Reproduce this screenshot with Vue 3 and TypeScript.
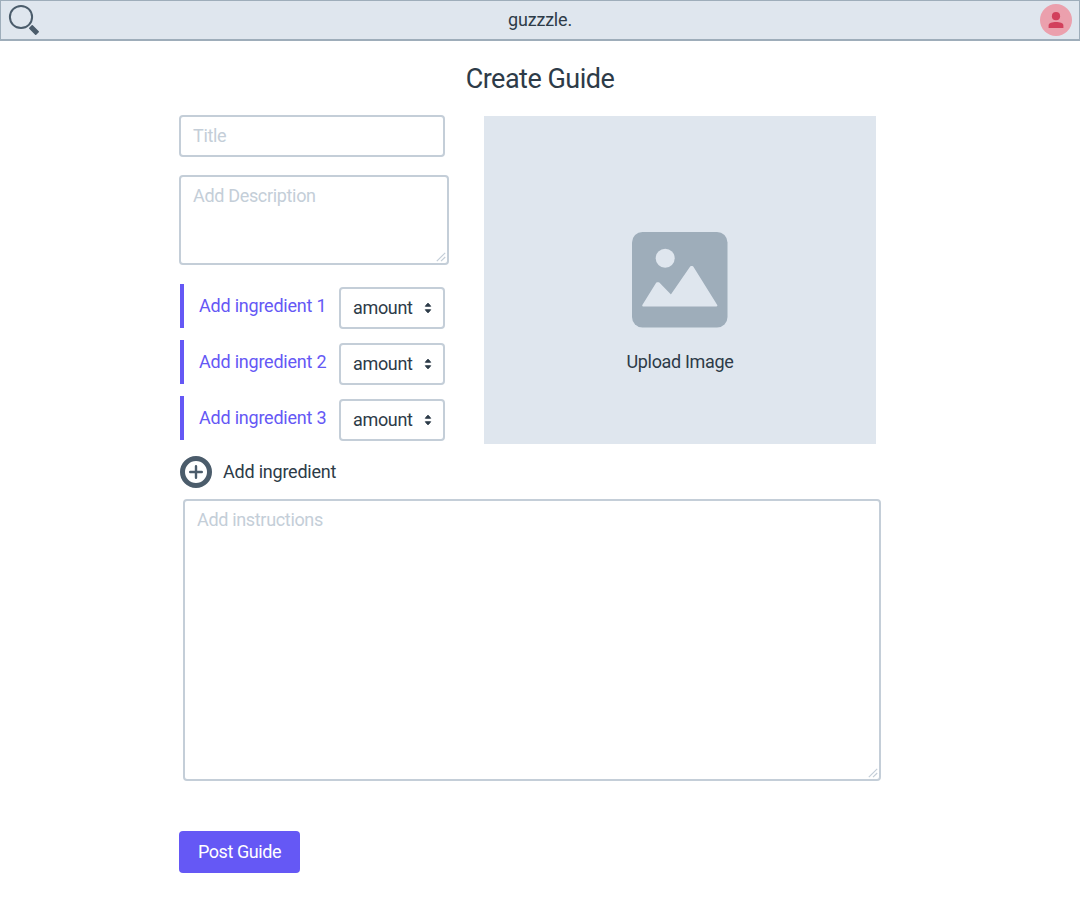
<script setup lang="ts">
import { ref } from 'vue'

interface Ingredient {
  id: number
  label: string
}

const ingredients = ref<Ingredient[]>([
  { id: 1, label: 'Add ingredient 1' },
  { id: 2, label: 'Add ingredient 2' },
  { id: 3, label: 'Add ingredient 3' },
])

function addIngredient(): void {
  const id = ingredients.value.length + 1
  ingredients.value.push({ id, label: `Add ingredient ${id}` })
}
</script>

<template>
  <div class="page">
    <header class="bar">
      <svg class="search" width="32" height="32" viewBox="0 0 32 32">
        <circle cx="13" cy="13" r="11.1" fill="none" stroke="#4b5c6b" stroke-width="2" />
        <path d="M21.8 24.2 24.2 21.8 30.2 27.7 27.7 30.2Z" fill="#4b5c6b" stroke="#4b5c6b" stroke-width="1.6" stroke-linejoin="round" />
      </svg>
      <span class="brand">guzzzle.</span>
      <svg class="avatar" width="32" height="32" viewBox="0 0 32 32">
        <circle cx="16" cy="16" r="16" fill="#eba0ad" />
        <circle cx="16" cy="12.2" r="4.1" fill="#d2405c" />
        <path d="M8.6 24V21.4C8.6 18.8 12.4 18 16 18S23.4 18.8 23.4 21.4V24Z" fill="#d2405c" />
      </svg>
    </header>

    <h1>Create Guide</h1>

    <main>
      <div class="top">
        <section class="fields">
          <div class="box title"><span>Title</span></div>
          <div class="box description">
            <span>Add Description</span>
            <svg class="grip" width="10" height="10" viewBox="0 0 10 10">
              <path d="M.8 9.2 9.2 .8M5 9.2 9.2 5" />
            </svg>
          </div>
          <div v-for="item in ingredients" :key="item.id" class="row">
            <div class="ingredient"><span>{{ item.label }}</span></div>
            <div class="box select">
              <span>amount</span>
              <svg width="8" height="12" viewBox="0 0 8 12">
                <path d="M1.3 4.3 3.5 1.5H4.5L6.7 4.3ZM1.3 7.7 3.5 10.5H4.5L6.7 7.7Z" />
              </svg>
            </div>
          </div>
          <div class="add" @click="addIngredient">
            <svg width="32" height="32" viewBox="0 0 32 32">
              <circle cx="16" cy="16" r="13.5" fill="none" stroke="#4b5c6b" stroke-width="5" />
              <path d="M16 10.2V21.8M10.2 16H21.8" stroke="#4b5c6b" stroke-width="2.4" stroke-linecap="round" />
            </svg>
            <span>Add ingredient</span>
          </div>
        </section>

        <section class="upload">
          <svg width="97" height="96" viewBox="0 0 97 96">
            <rect width="95.5" height="95.5" rx="10.5" fill="#9eadba" />
            <circle cx="33.2" cy="26.2" r="9.5" fill="#dfe6ee" />
            <path d="M11.2 73.5 25 51.2 26.6 51.2 39 64 59 35 60.4 35 84.4 73.5Z" fill="#dfe6ee" stroke="#dfe6ee" stroke-width="2" stroke-linejoin="round" />
          </svg>
          <span>Upload Image</span>
        </section>
      </div>

      <div class="box instructions">
        <span>Add instructions</span>
        <svg class="grip" width="10" height="10" viewBox="0 0 10 10">
          <path d="M.8 9.2 9.2 .8M5 9.2 9.2 5" />
        </svg>
      </div>

      <button type="button"><span>Post Guide</span></button>
    </main>
  </div>
</template>

<style>
body {
  margin: 0;
  background: #fff;
}
</style>

<style scoped>
.page {
  box-sizing: border-box;
  height: 924px;
  font: 18px/24px Roboto, "Liberation Sans", sans-serif;
  letter-spacing: -0.33px;
  color: #2d3b48;
}
.page * {
  box-sizing: border-box;
}
svg {
  display: block;
  flex: none;
}
span {
  white-space: nowrap;
}
.bar {
  display: flex;
  align-items: center;
  justify-content: space-between;
  height: 41px;
  padding: 0 7px;
  background: #dfe6ee;
  border: 1px solid #9eadba;
  border-bottom-width: 2px;
}
.brand {
  letter-spacing: -0.2px;
}
h1 {
  margin: 22px 0 0;
  font-size: 27px;
  font-weight: 400;
  line-height: 32px;
  letter-spacing: -0.5px;
  text-align: center;
}
main {
  width: 702px;
  margin: 20px 0 0 179px;
}
.top {
  display: flex;
  justify-content: space-between;
  width: 697px;
}
.fields {
  width: 270px;
}
.box {
  background: #fff;
  border: 2px solid #c4ced8;
  border-radius: 4px;
  color: #c4ced8;
  padding: 7px 12px;
}
.title {
  width: 266px;
  height: 42px;
}
.description {
  position: relative;
  height: 90px;
  margin: 18px 0 19px;
}
.grip {
  position: absolute;
  right: 1px;
  bottom: 1px;
  fill: none;
  stroke: #c4ced8;
  stroke-width: 1.2;
}
.row {
  display: flex;
  justify-content: space-between;
  width: 265px;
  height: 44px;
  margin: 0 0 12px 1px;
}
.ingredient {
  border-left: 4px solid #6558f5;
  color: #6558f5;
  letter-spacing: -0.22px;
  padding: 10px 0 0 15px;
}
.select {
  display: flex;
  justify-content: space-between;
  width: 106px;
  height: 42px;
  margin-top: 3px;
  padding-right: 11.5px;
  color: #2d3b48;
}
.select svg {
  margin-top: 5.5px;
  fill: #2d3b48;
  stroke: #2d3b48;
  stroke-width: 0.9;
  stroke-linejoin: round;
}
.add {
  display: flex;
  align-items: center;
  gap: 11px;
  height: 32px;
  margin: 16px 0 0 1px;
  letter-spacing: -0.22px;
}
.upload {
  display: flex;
  flex-direction: column;
  align-items: center;
  gap: 22px;
  width: 392px;
  height: 328px;
  margin-top: 1px;
  padding-top: 116px;
  background: #dfe6ee;
}
.instructions {
  position: relative;
  width: 698px;
  height: 282px;
  margin: 11px 0 50px 4px;
}
button {
  display: block;
  width: 121px;
  height: 42px;
  padding: 0;
  border: 0;
  border-radius: 4px;
  background: #6558f5;
  color: #fff;
  font: inherit;
  letter-spacing: -0.42px;
}
</style>
